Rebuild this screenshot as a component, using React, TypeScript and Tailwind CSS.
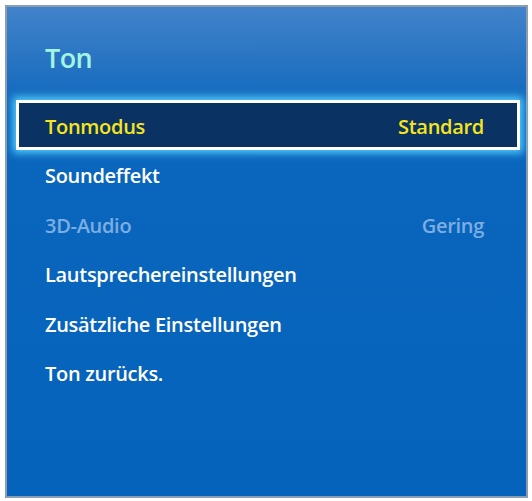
const items = [
  { label: 'Tonmodus', value: 'Standard', active: true },
  { label: 'Soundeffekt' },
  { label: '3D-Audio', value: 'Gering', disabled: true },
  { label: 'Lautsprechereinstellungen' },
  { label: 'Zusätzliche Einstellungen' },
  { label: 'Ton zurücks.' },
];

export default function App() {
  return (
    <div className="w-[532px] h-[501px] bg-white p-[5px] font-['Open_Sans',sans-serif]">
      <div className="h-[493px] w-[523px] border-2 border-[#8c9cb1] bg-[linear-gradient(to_bottom,#4183ca_0%,#2a75c3_10%,#0b66bd_22%,#0563bb_100%)]">
        {/* header */}
        <div className="pl-[38px] pt-[37px] h-[93px] text-[27px] font-semibold leading-none tracking-[-0.6px] text-[#a3f5e2]">
          Ton
        </div>

        {/* menu */}
        <ul className="flex flex-col">
          {items.map((item) => (
            <li
              key={item.label}
              className={
                item.active
                  ? 'ml-[9px] mr-[6px] h-[50px] pt-[3px] flex items-center justify-between border-[3px] border-white bg-[#0a3263] pl-[26px] pr-[33px] shadow-[0_0_8px_3px_#55d0ff] text-[#f7e51c]'
                  : item.disabled
                    ? 'ml-[9px] mr-[6px] h-[49.5px] pt-[3px] flex items-center justify-between border-[3px] border-transparent pl-[26px] pr-[33px] text-[#7caee2]'
                    : 'ml-[9px] mr-[6px] h-[49.5px] pt-[3px] flex items-center justify-between border-[3px] border-transparent pl-[26px] pr-[33px] text-white'
              }
            >
              <span className="text-[20px] font-semibold tracking-[-0.3px]">{item.label}</span>
              {item.value && <span className="text-[20px] font-semibold tracking-[-0.3px]">{item.value}</span>}
            </li>
          ))}
        </ul>
      </div>
    </div>
  );
}
